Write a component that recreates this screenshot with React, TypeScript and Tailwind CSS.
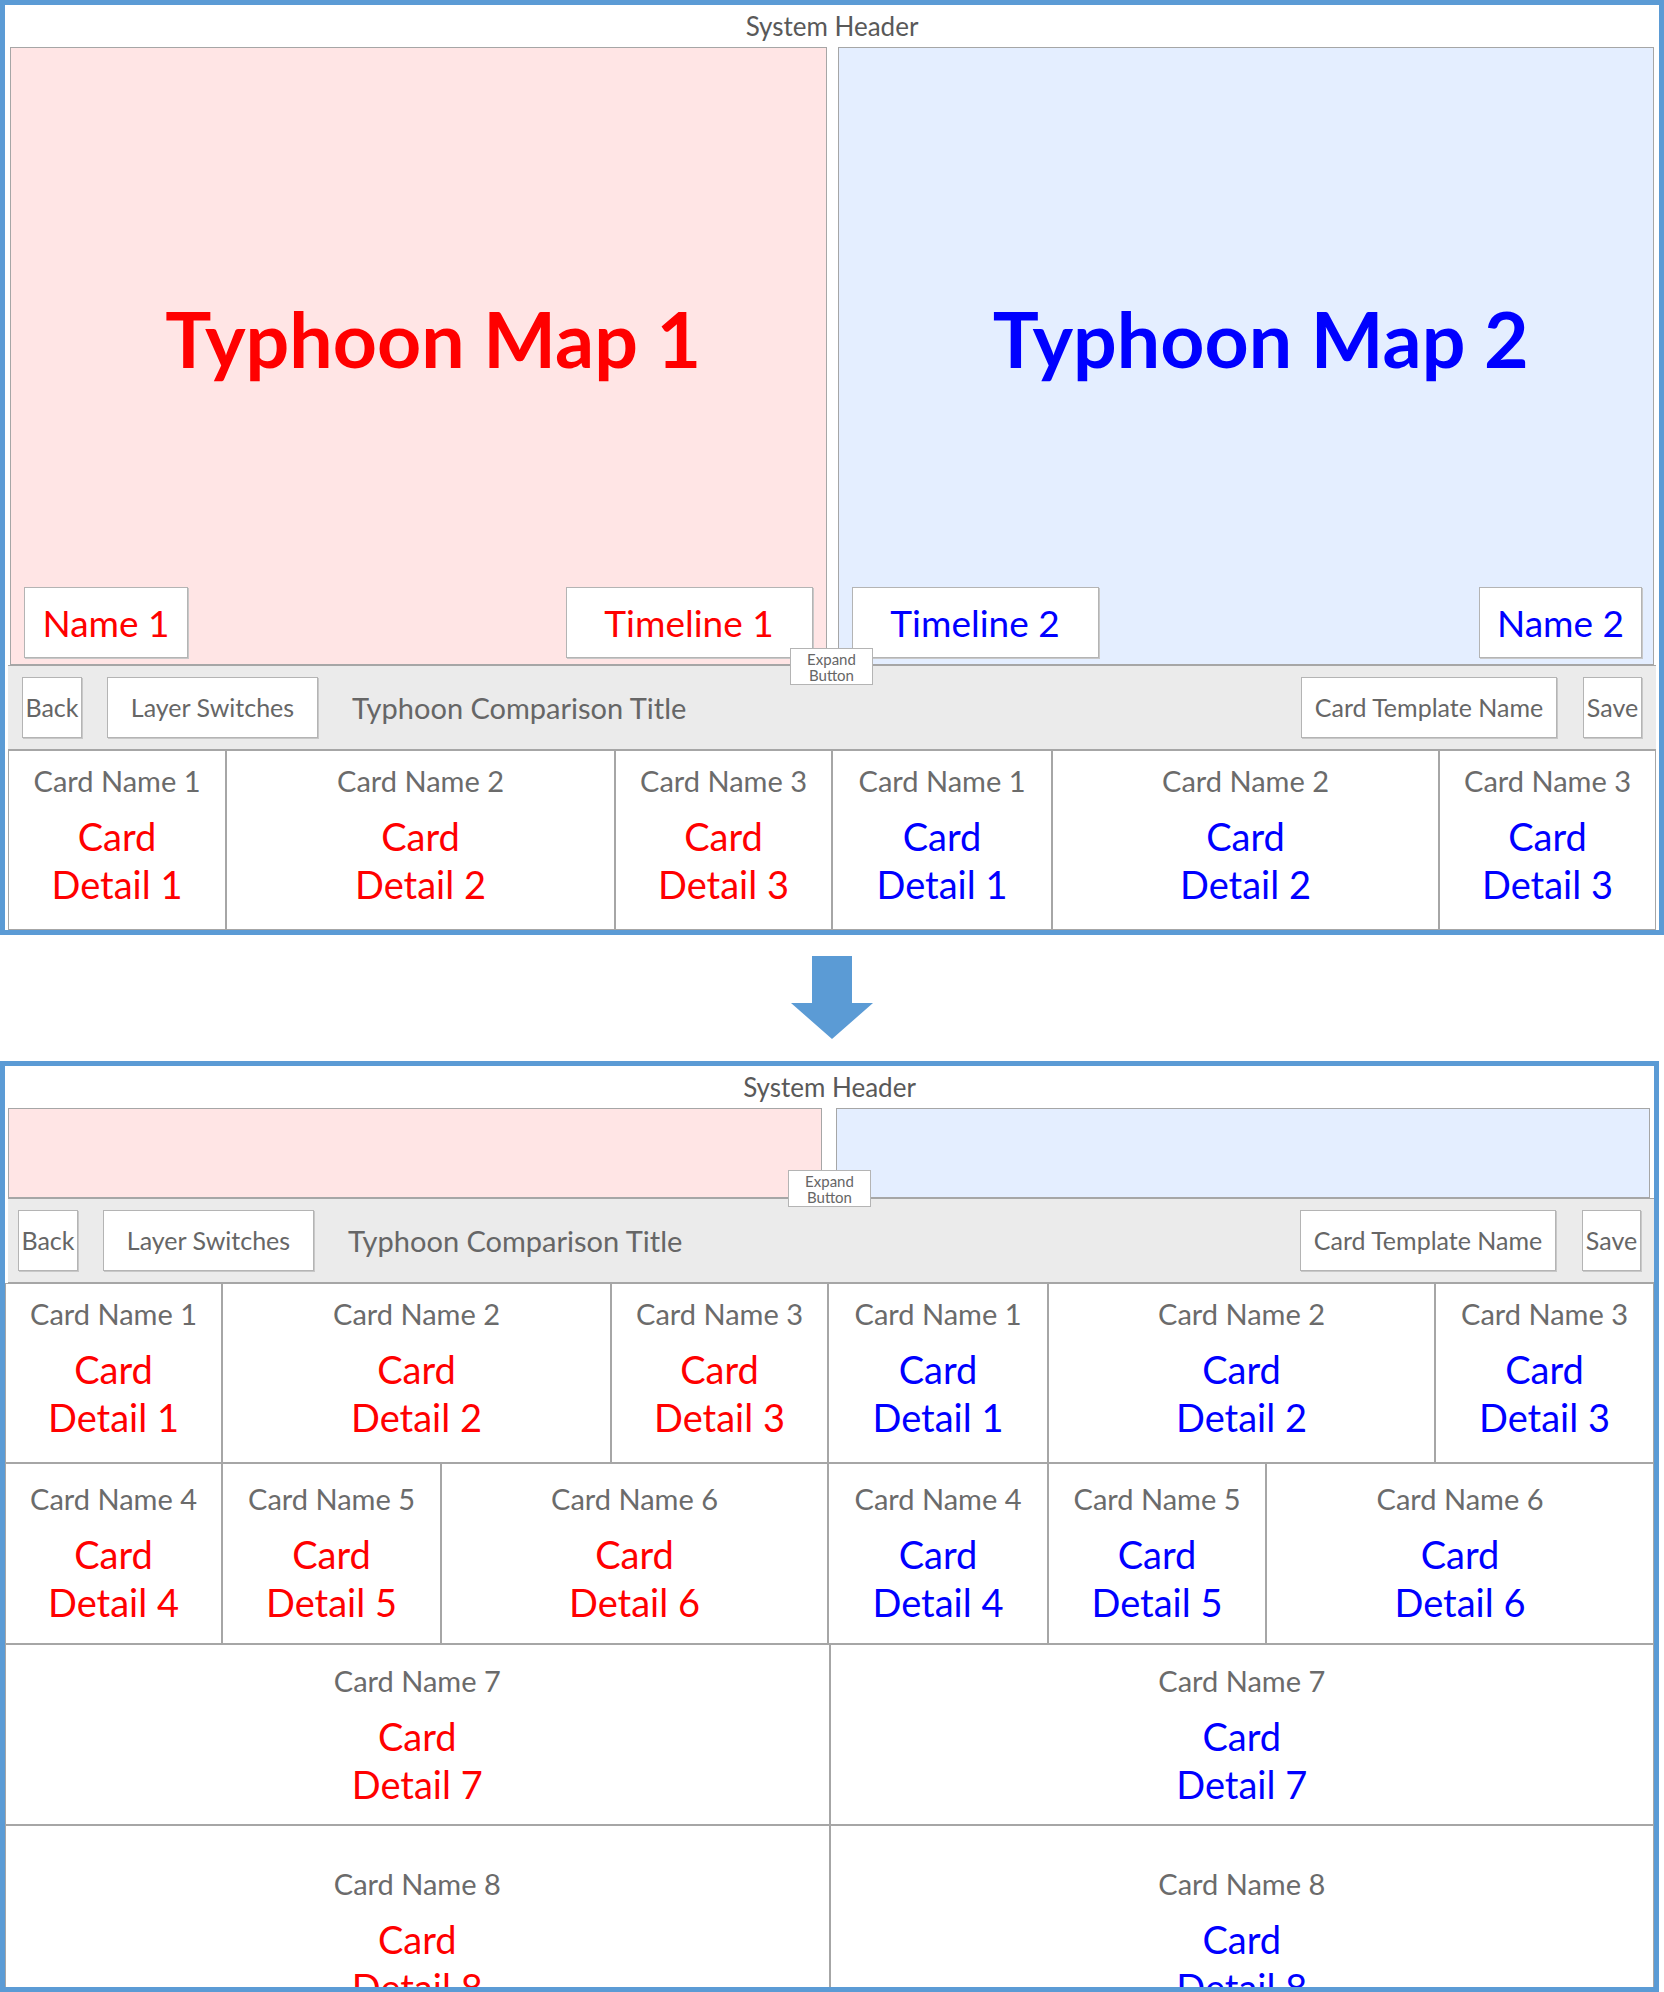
import React from "react";

type CardData = { name: string; detail: string };

function Btn({ children, className = "" }: { children: React.ReactNode; className?: string }) {
  return (
    <div
      className={
        "h-[61px] bg-white border border-[#b4b4b4] shadow-[1px_1px_0_#c8c8c8] flex items-center justify-center text-[25px] text-[#666666] whitespace-nowrap " +
        className
      }
    >
      {children}
    </div>
  );
}

function Toolbar({ className = "" }: { className?: string }) {
  return (
    <div className={"h-[85px] shrink-0 bg-[#ebebeb] border-y border-[#a6a6a6] flex items-center " + className}>
      <Btn className="w-[60px]">Back</Btn>
      <Btn className="w-[211px] ml-[25px]">Layer Switches</Btn>
      <div className="ml-[34px] text-[29px] text-[#666666] whitespace-nowrap">Typhoon Comparison Title</div>
      <Btn className="w-[256px] ml-auto">Card Template Name</Btn>
      <Btn className="w-[59px] ml-[26px]">Save</Btn>
    </div>
  );
}

function ExpandButton({ className = "" }: { className?: string }) {
  return (
    <div
      className={
        "absolute w-[83px] h-[37px] bg-white border border-[#b4b4b4] flex flex-col items-center justify-center text-[15px] leading-[16px] text-[#666666] " +
        className
      }
    >
      <span>Expand</span>
      <span>Button</span>
    </div>
  );
}

function Label({ children, color, w }: { children: React.ReactNode; color: string; w: string }) {
  return (
    <div
      className={
        "h-[71px] bg-white border border-[#b4b4b4] shadow-[1px_1px_0_#c8c8c8] flex items-center justify-center text-[37px] whitespace-nowrap " +
        color +
        " " +
        w
      }
    >
      {children}
    </div>
  );
}

function Card({ d, color, pt }: { d: CardData; color: string; pt: string }) {
  return (
    <div className={"border border-[#a6a6a6] bg-white flex flex-col items-center text-center overflow-hidden " + pt}>
      <div className="text-[29px] leading-[36px] text-[#6b6b6b] whitespace-nowrap">{d.name}</div>
      <div className={"mt-[13px] text-[38px] leading-[48px] " + color}>
        Card
        <br />
        {d.detail}
      </div>
    </div>
  );
}

const row1: CardData[] = [
  { name: "Card Name 1", detail: "Detail 1" },
  { name: "Card Name 2", detail: "Detail 2" },
  { name: "Card Name 3", detail: "Detail 3" },
];
const row2: CardData[] = [
  { name: "Card Name 4", detail: "Detail 4" },
  { name: "Card Name 5", detail: "Detail 5" },
  { name: "Card Name 6", detail: "Detail 6" },
];

const RED = "text-[#ff0000]";
const BLU = "text-[#0000ff]";

function TopFrame() {
  return (
    <div className="relative w-[1664px] h-[935px] border-[5px] border-[#5b9bd5] flex flex-col">
      <div className="h-[42px] shrink-0 flex items-center justify-center text-[26px] text-[#595959]">System Header</div>
      <div className="h-[618px] shrink-0 flex gap-[11px] px-[5px]">
        <div className="flex-1 border border-[#a6a6a6] bg-[#ffe5e5] flex flex-col">
          <div className="pt-[245px] pl-[30px] text-center font-bold text-[77px] leading-[90px] text-[#ff0000] whitespace-nowrap">
            Typhoon Map 1
          </div>
          <div className="mt-auto flex justify-between items-end px-[13px] pb-[6px]">
            <Label color={RED} w="w-[164px]">Name 1</Label>
            <Label color={RED} w="w-[247px]">Timeline 1</Label>
          </div>
        </div>
        <div className="flex-1 border border-[#a6a6a6] bg-[#e4eeff] flex flex-col">
          <div className="pt-[245px] pl-[30px] text-center font-bold text-[77px] leading-[90px] text-[#0000ff] whitespace-nowrap">
            Typhoon Map 2
          </div>
          <div className="mt-auto flex justify-between items-end pl-[13px] pr-[11px] pb-[6px]">
            <Label color={BLU} w="w-[247px]">Timeline 2</Label>
            <Label color={BLU} w="w-[163px]">Name 2</Label>
          </div>
        </div>
      </div>
      <Toolbar className="mx-[3px] px-[14px]" />
      <div className="mx-[3px] flex-1 grid grid-cols-[218fr_389fr_217fr_220fr_387fr_217fr]">
        {row1.map((d) => (
          <Card key={"l" + d.name} d={d} color={RED} pt="pt-[12px]" />
        ))}
        {row1.map((d) => (
          <Card key={"r" + d.name} d={d} color={BLU} pt="pt-[12px]" />
        ))}
      </div>
      <ExpandButton className="left-[785px] top-[643px]" />
    </div>
  );
}

function Arrow() {
  return (
    <div className="w-[1664px] flex justify-center pt-[21px] pb-[22px]">
      <svg width="82" height="83" viewBox="0 0 82 83">
        <path d="M21 0 H61 V47 H82 L41 83 L0 47 H21 Z" fill="#5b9bd5" />
      </svg>
    </div>
  );
}

function BottomFrame() {
  return (
    <div className="relative w-[1659px] h-[931px] border-[5px] border-[#5b9bd5] flex flex-col overflow-hidden">
      <div className="h-[42px] shrink-0 flex items-center justify-center text-[26px] text-[#595959]">System Header</div>
      <div className="h-[90px] shrink-0 flex gap-[14px] pl-[3px] pr-[4px]">
        <div className="flex-1 border border-[#a6a6a6] bg-[#ffe5e5]" />
        <div className="flex-1 border border-[#a6a6a6] bg-[#e4eeff]" />
      </div>
      <Toolbar className="ml-[3px] pl-[10px] pr-[13px]" />
      <div className="h-[180px] shrink-0 grid grid-cols-[217fr_389fr_217fr_220fr_387fr_219fr]">
        {row1.map((d) => (
          <Card key={"l" + d.name} d={d} color={RED} pt="pt-[12px]" />
        ))}
        {row1.map((d) => (
          <Card key={"r" + d.name} d={d} color={BLU} pt="pt-[12px]" />
        ))}
      </div>
      <div className="h-[181px] shrink-0 grid grid-cols-[217fr_219fr_387fr_220fr_218fr_388fr]">
        {row2.map((d) => (
          <Card key={"l" + d.name} d={d} color={RED} pt="pt-[17px]" />
        ))}
        {row2.map((d) => (
          <Card key={"r" + d.name} d={d} color={BLU} pt="pt-[17px]" />
        ))}
      </div>
      <div className="h-[181px] shrink-0 grid grid-cols-2">
        <Card d={{ name: "Card Name 7", detail: "Detail 7" }} color={RED} pt="pt-[18px]" />
        <Card d={{ name: "Card Name 7", detail: "Detail 7" }} color={BLU} pt="pt-[18px]" />
      </div>
      <div className="h-[200px] shrink-0 grid grid-cols-2">
        <Card d={{ name: "Card Name 8", detail: "Detail 8" }} color={RED} pt="pt-[40px]" />
        <Card d={{ name: "Card Name 8", detail: "Detail 8" }} color={BLU} pt="pt-[40px]" />
      </div>
      <ExpandButton className="left-[783px] top-[104px]" />
    </div>
  );
}

export default function App() {
  return (
    <div className="w-[1664px] h-[1992px] bg-white overflow-hidden font-['Lato',sans-serif]">
      <TopFrame />
      <Arrow />
      <BottomFrame />
    </div>
  );
}
